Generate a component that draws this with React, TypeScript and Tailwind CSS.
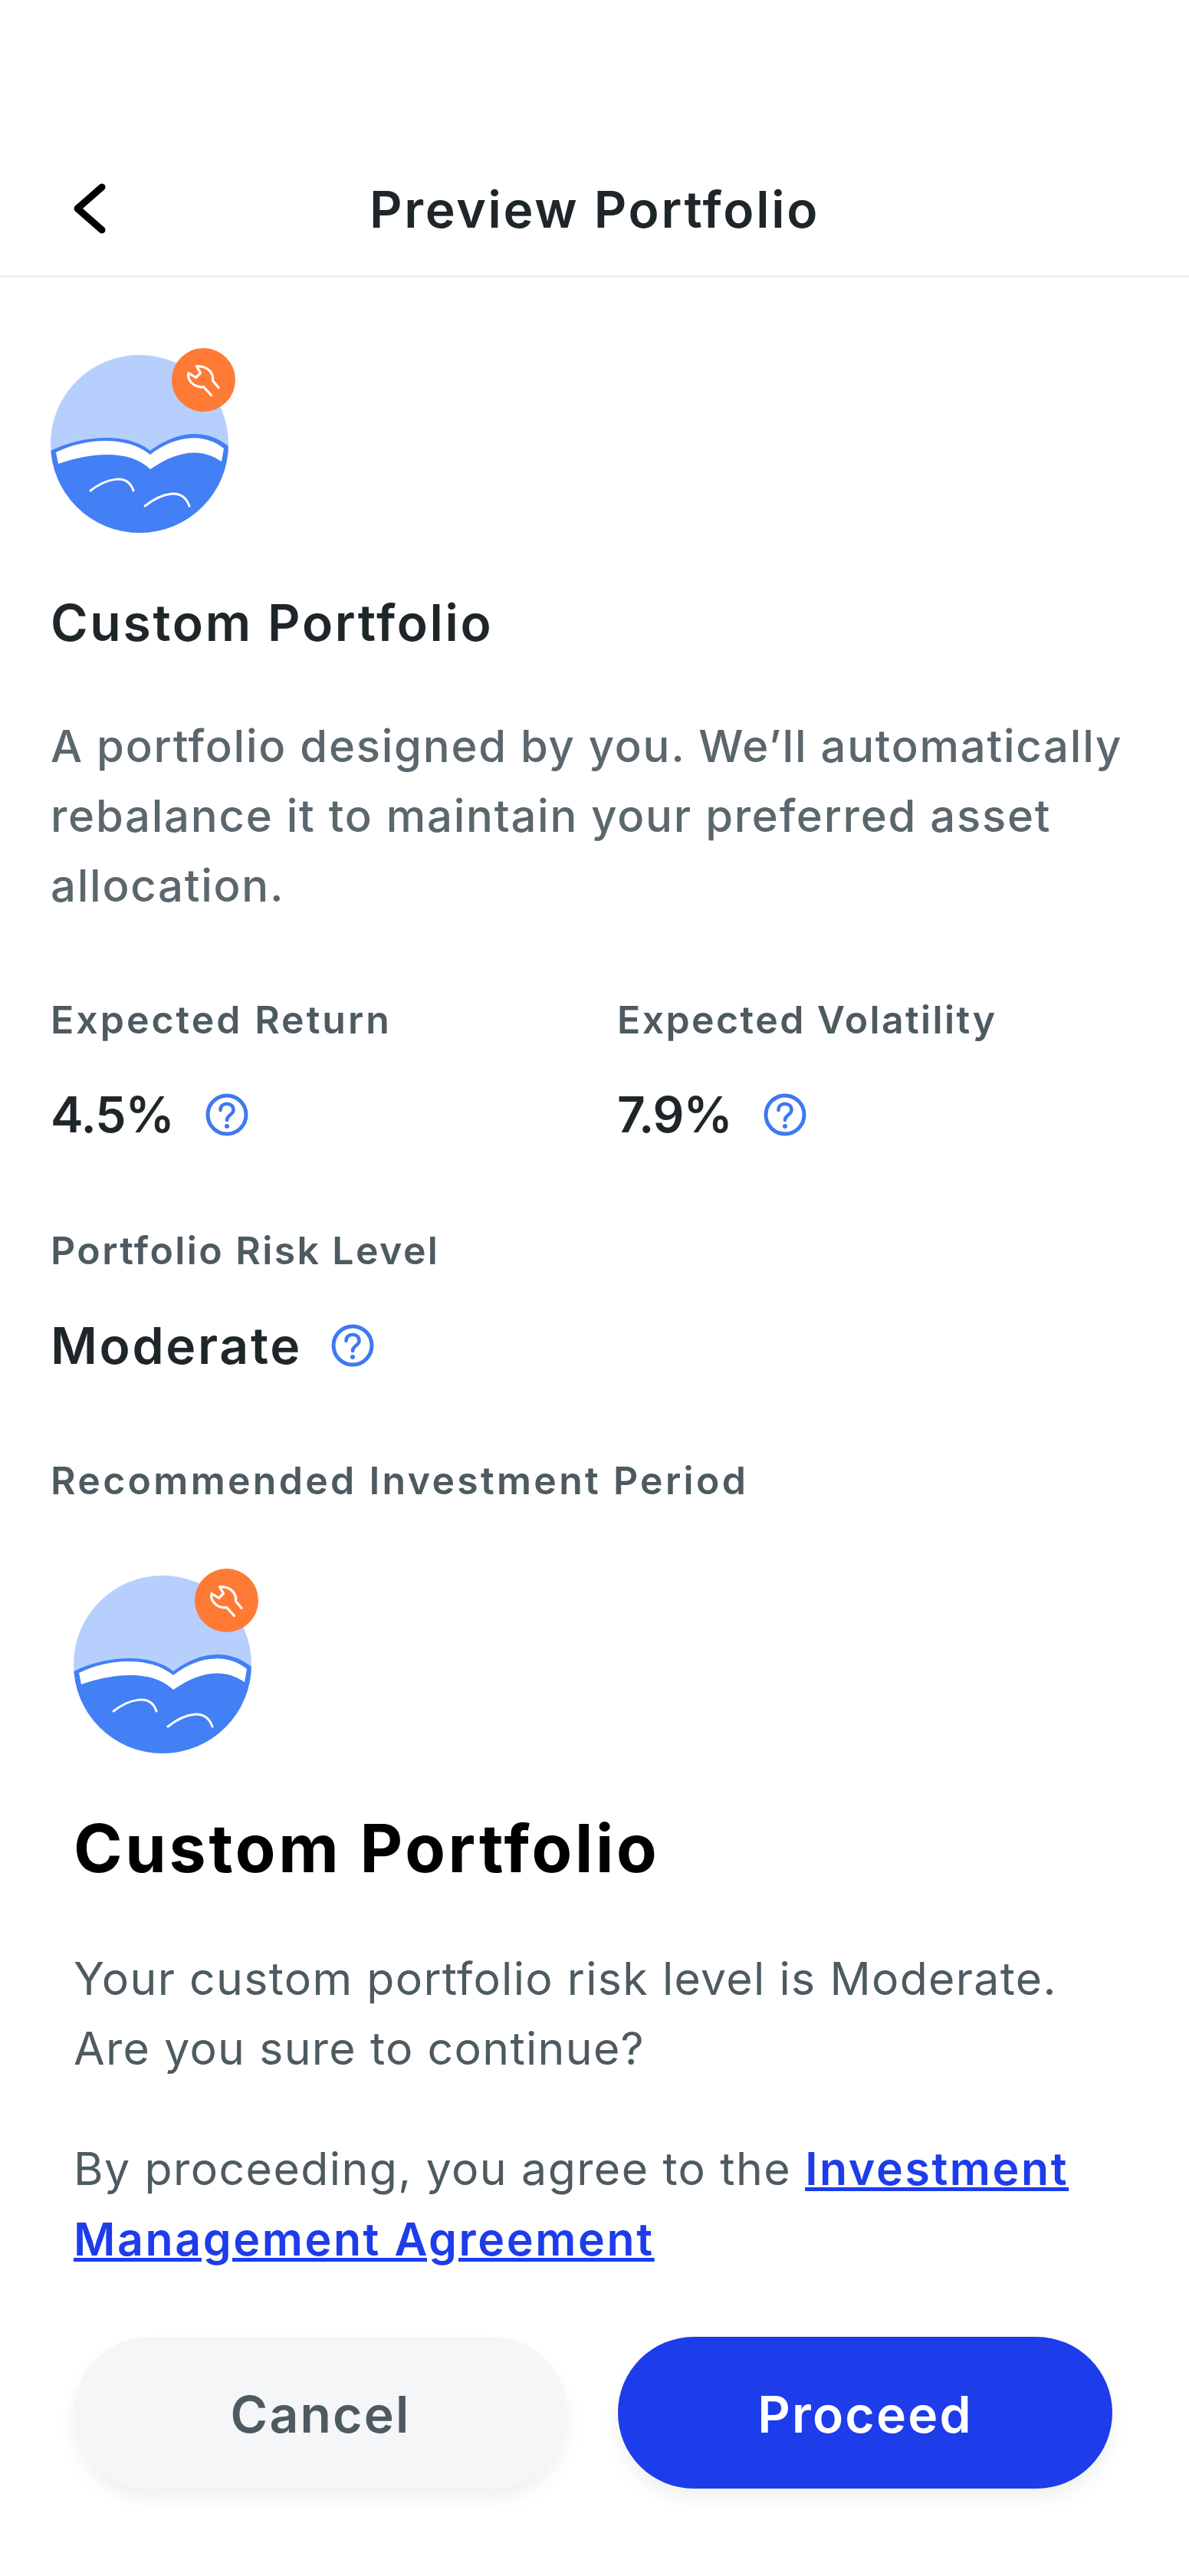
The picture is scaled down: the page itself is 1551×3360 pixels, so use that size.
import React from "react";

function PortfolioIcon() {
  return (
    <div className="relative h-[232px] w-[232px]">
      <svg viewBox="0 0 232 232" className="block h-[232px] w-[232px]">
        <defs>
          <clipPath id="c">
            <circle cx="116" cy="116" r="116" />
          </clipPath>
        </defs>
        <circle cx="116" cy="116" r="116" fill="#b6cffd" />
        <g clipPath="url(#c)">
          <path d="M0 125 C40 105 100 100 130 125 C155 106 195 90 232 119 L232 232 L0 232 Z" fill="#437ff5" />
          <path d="M7 127 C45 108 100 105 130 130 C155 110 195 97 226 122 L223 139 C195 120 165 125 130 149 C105 125 60 125 10 142 Z" fill="#fff" />
          <path d="M52 177 C70 163 100 152 108 177" fill="none" stroke="#fff" strokeWidth="3" strokeLinecap="round" />
          <path d="M123 197 C145 180 172 172 181 197" fill="none" stroke="#fff" strokeWidth="3" strokeLinecap="round" />
        </g>
      </svg>
      <div className="absolute left-[158px] top-[-9px] h-[83px] w-[83px] rounded-full bg-[#ff7a35]">
        <svg viewBox="-41.5 -41.5 83 83" className="block h-[83px] w-[83px]" fill="none" stroke="#fff" strokeWidth="3.2" strokeLinecap="round" strokeLinejoin="round">
          <path d="M12 1 L19.5 10 M0 9 L10 20 M12 1 C13 -6 9 -18 -9 -18 L-4 -9 L-10 -3 L-19.5 -9 C-22 2 -10 11 0 9" />
        </svg>
      </div>
    </div>
  );
}

function Help() {
  return (
    <svg viewBox="0 0 56 56" className="h-[56px] w-[56px] shrink-0" fill="none">
      <circle cx="28" cy="28" r="25" stroke="#3f78f2" strokeWidth="5" />
      <path d="M19.5 22 C19.5 11 36.5 11 36.5 22 C36.5 28 28 28 28 35" stroke="#3f78f2" strokeWidth="4.5" strokeLinecap="round" />
      <circle cx="28" cy="43" r="3" fill="#3f78f2" />
    </svg>
  );
}

function Stat({ label, labelClass, value, valueClass }: { label: string; labelClass: string; value: string; valueClass: string }) {
  return (
    <div>
      <div className={`h-[44px] text-[50px] leading-[44px] font-semibold text-[#4d5b61] ${labelClass}`}>{label}</div>
      <div className={`mt-[70px] flex h-[64px] items-center font-semibold text-[#1f2629] ${valueClass}`}>
        <span>{value}</span>
        <Help />
      </div>
    </div>
  );
}

export default function App() {
  return (
    <div className="h-[3360px] w-[1551px] overflow-hidden bg-white font-['Inter','Liberation_Sans',sans-serif]">
      <header className="relative mt-[174px] flex h-[188px] items-center justify-center border-b-[3px] border-[#edf0f2] pt-[14px]">
        <svg viewBox="0 0 50 72" className="absolute left-[90px] top-[62px] h-[72px] w-[50px]" fill="none" stroke="#000" strokeWidth="9" strokeLinecap="round" strokeLinejoin="round">
          <path d="M43 8 L11 36 L43 64" />
        </svg>
        <h1 className="text-[66px] font-semibold tracking-[2.7px] text-[#1f2629]">Preview Portfolio</h1>
      </header>

      <main className="px-[66px] pt-[101px]">
        <PortfolioIcon />
        <h2 className="mt-[85px] text-[66px] leading-[64px] font-semibold tracking-[2.7px] text-[#1f2629]">Custom Portfolio</h2>
        <p className="mt-[84px] w-[1440px] text-[58px] leading-[91px] font-medium tracking-[1.75px] text-[#5a676c]">
          A portfolio designed by you. We’ll automatically rebalance it to maintain your preferred asset allocation.
        </p>
        <div className="mt-[107px] flex">
          <div className="w-[739px]">
            <Stat label="Expected Return" labelClass="tracking-[3px]" value="4.5%" valueClass="gap-[41px] text-[64px] leading-[64px] tracking-[-1px]" />
          </div>
          <Stat label="Expected Volatility" labelClass="tracking-[2.4px]" value="7.9%" valueClass="gap-[41px] text-[64px] leading-[64px] tracking-[-1px]" />
        </div>
        <div className="mt-[123px]">
          <Stat label="Portfolio Risk Level" labelClass="tracking-[2.4px]" value="Moderate" valueClass="gap-[38px] text-[66px] leading-[64px] tracking-[2.7px]" />
        </div>
        <div className="mt-[122px] h-[44px] text-[50px] leading-[44px] font-semibold tracking-[3.3px] text-[#4d5b61]">Recommended Investment Period</div>
      </main>

      <section className="mt-[102px] bg-white px-[96px]">
        <PortfolioIcon />
        <h2 className="mt-[82px] text-[86px] leading-[84px] font-bold tracking-[3.7px] text-black">Custom Portfolio</h2>
        <p className="mt-[82px] text-[59px] leading-[91px] tracking-[1.3px] text-[#4d5b61]">
          Your custom portfolio risk level is Moderate.
          <br />
          Are you sure to continue?
        </p>
        <p className="mt-[66px] text-[59px] leading-[92px] tracking-[1.4px] text-[#4d5b61]">
          By proceeding, you agree to the{" "}
          <a className="font-semibold tracking-[2.6px] text-[#1d3cea] underline">
            Investment
            <br />
            Management Agreement
          </a>
        </p>
        <div className="mt-[81px] flex gap-[66px]">
          <button className="h-[198px] w-[644px] rounded-full bg-[#f5f6f8] pt-[4px] text-[66px] font-semibold tracking-[2.2px] text-[#4d5b61] shadow-[0_14px_24px_rgba(0,0,0,0.06)]">Cancel</button>
          <button className="h-[198px] w-[645px] rounded-full bg-[#1d3cea] pt-[4px] text-[66px] font-semibold tracking-[2.2px] text-white shadow-[0_14px_24px_rgba(0,0,0,0.06)]">Proceed</button>
        </div>
      </section>
    </div>
  );
}
